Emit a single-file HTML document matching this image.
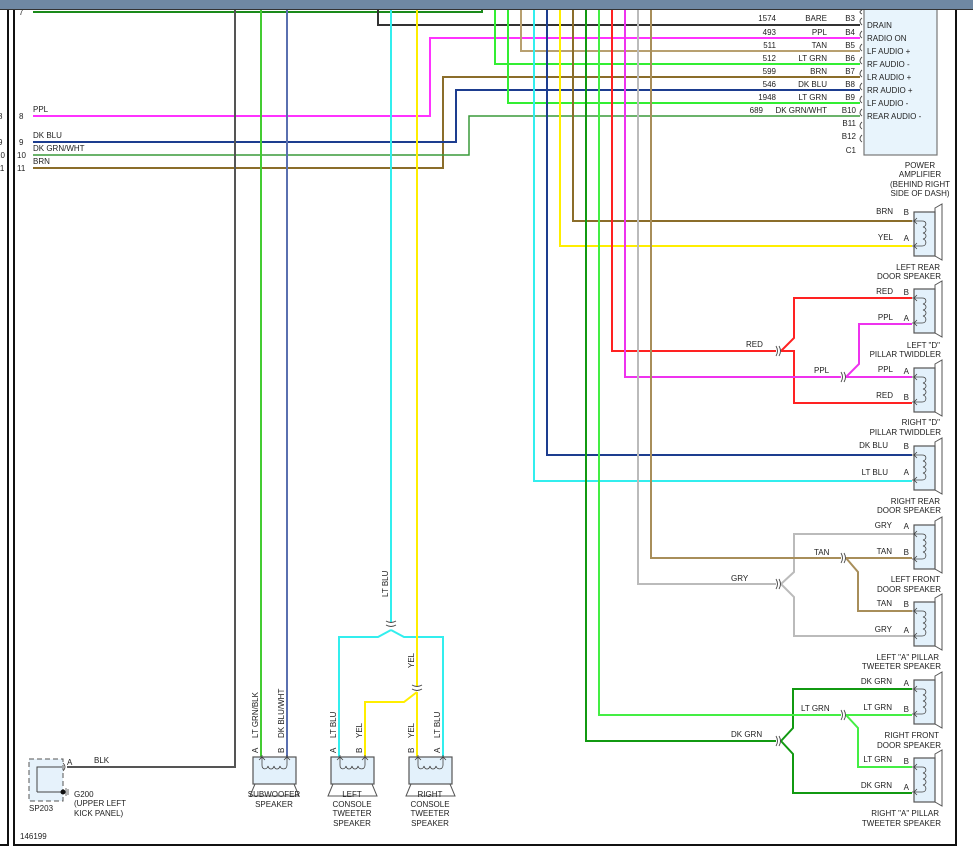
<!DOCTYPE html>
<html><head><meta charset="utf-8"><style>
html,body{margin:0;padding:0;background:#fff}
svg{display:block}
text{font-family:"Liberation Sans",sans-serif;font-size:8px;fill:#222}
</style></head><body>
<svg width="973" height="854" viewBox="0 0 973 854" xmlns="http://www.w3.org/2000/svg">
<defs>
<g id="rs">
<polygon points="21,-4 28,-8 28,48 21,44" fill="#fff" stroke="#555" stroke-width="1"/>
<rect x="0" y="0" width="21" height="44" fill="#e3f1fb" stroke="#555" stroke-width="1.2"/>
<path d="M-2,9 L8,9 M-2,34 L8,34 M3,6 L0,9 L3,12 M3,31 L0,34 L3,37" fill="none" stroke="#444" stroke-width="0.8"/>
<path d="M8,9 C13,9 13,14 9,15 C13,16 13,20 9,21 C13,22 13,26 9,27 C13,28 13,34 8,34" fill="none" stroke="#444" stroke-width="0.8"/>
</g>
<g id="bs">
<polygon points="2,27 -3,39 46,39 41,27" fill="#fff" stroke="#555" stroke-width="1"/>
<rect x="0" y="0" width="43" height="27" fill="#e3f1fb" stroke="#555" stroke-width="1.2"/>
<path d="M9,-2 L9,8 M34,-2 L34,8 M6,3 L9,0 L12,3 M31,3 L34,0 L37,3" fill="none" stroke="#444" stroke-width="0.8"/>
<path d="M9,8 C9,13 14,13 15,9 C16,13 20,13 21,9 C22,13 26,13 27,9 C28,13 34,13 34,8" fill="none" stroke="#444" stroke-width="0.8"/>
</g>
</defs>
<!-- top bar -->
<rect x="0" y="0" width="973" height="9" fill="#6f88a3"/>
<line x1="0" y1="9.5" x2="973" y2="9.5" stroke="#333" stroke-width="1"/>
<!-- borders -->
<g stroke="#111" stroke-width="2" fill="none">
<path d="M8,10 L8,845 L0,845"/>
<path d="M14,10 L14,845 L956,845 L956,10"/>
</g>
<g font-size="8">
<text x="19" y="15">7</text>
<text x="19" y="119">8</text>
<text x="19" y="145">9</text>
<text x="17" y="158">10</text>
<text x="17" y="171">11</text>
<text x="-2" y="119">8</text>
<text x="-2" y="145">9</text>
<text x="-4" y="158">10</text>
<text x="-4" y="171">11</text>
</g>
<!-- wires -->
<g fill="none" stroke-width="2">
<path d="M33,12 L482,12 L482,9" stroke="#1a8a1a"/>
<path d="M378,9 L378,25 L860,25" stroke="#333"/>
<path d="M33,116 L430,116 L430,38 L860,38" stroke="#ff33ff"/>
<path d="M33,168 L443,168 L443,77 L860,77" stroke="#8b6d2a"/>
<path d="M33,142 L456,142 L456,90 L860,90" stroke="#1d3d8f"/>
<path d="M33,155 L469,155 L469,116 L860,116" stroke="#3a9a3a" stroke-width="1.5"/>
<path d="M495,9 L495,64 L860,64" stroke="#33ee33"/>
<path d="M508,9 L508,103 L860,103" stroke="#33ee33"/>
<path d="M521,9 L521,51 L860,51" stroke="#b8a070"/>
<path d="M235,9 L235,767 L67,767" stroke="#555"/>
<path d="M261,9 L261,768" stroke="#44cc33"/>
<path d="M287,9 L287,768" stroke="#5a70b0"/>
<path d="M391,9 L391,622 M391,630 L378,637 L339,637 L339,768 M391,630 L404,637 L443,637 L443,768" stroke="#33eeee"/>
<path d="M417,9 L417,686 M417,692 L404,702 L365,702 L365,768 M417,692 L417,768" stroke="#ffee00"/>
<path d="M534,9 L534,481 L912,481" stroke="#33eeee"/>
<path d="M547,9 L547,455 L912,455" stroke="#1d3d8f"/>
<path d="M560,9 L560,246 L912,246" stroke="#ffee00"/>
<path d="M573,9 L573,221 L912,221" stroke="#8b6d2a"/>
<path d="M586,9 L586,741 L776,741 M781,741 L793,728 L793,689 L912,689 M781,741 L793,754 L793,793 L912,793" stroke="#119911"/>
<path d="M599,9 L599,715 L841,715 M846,715 L912,715 M846,715 L858,728 L858,767 L912,767" stroke="#44ee44"/>
<path d="M612,9 L612,351 L776,351 M781,351 L794,338 L794,298 L912,298 M781,351 L794,351 L794,403 L912,403" stroke="#ff2222"/>
<path d="M625,9 L625,377 L841,377 M846,377 L912,377 M846,377 L859,364 L859,324 L912,324" stroke="#ee33ee"/>
<path d="M638,9 L638,584 L776,584 M781,584 L794,572 L794,534 L912,534 M781,584 L794,597 L794,636 L912,636" stroke="#bbbbbb"/>
<path d="M651,9 L651,558 L841,558 M846,558 L912,558 M846,558 L858,572 L858,611 L912,611" stroke="#a88e5a"/>
</g>
<!-- inline connectors -->
<g fill="none" stroke="#444" stroke-width="0.9">
<path d="M776,346 Q779,351 776,356 M779,346 Q782,351 779,356"/>
<path d="M841,372 Q844,377 841,382 M844,372 Q847,377 844,382"/>
<path d="M776,579 Q779,584 776,589 M779,579 Q782,584 779,589"/>
<path d="M841,553 Q844,558 841,563 M844,553 Q847,558 844,563"/>
<path d="M776,736 Q779,741 776,746 M779,736 Q782,741 779,746"/>
<path d="M841,710 Q844,715 841,720 M844,710 Q847,715 844,720"/>
<path d="M386,621 Q391,624 396,621 M386,625 Q391,628 396,625"/>
<path d="M412,685 Q417,688 422,685 M412,689 Q417,692 422,689"/>
<path d="M862,18 Q858,21 862,25 M862,31 Q858,35 862,38 M862,44 Q858,48 862,51 M862,57 Q858,61 862,64 M862,70 Q858,74 862,77 M862,83 Q858,87 862,90 M862,96 Q858,100 862,103 M862,109 Q858,113 862,116 M862,122 Q858,126 862,129 M862,135 Q858,139 862,142 M862,10 Q858,12 862,14"/>
</g>
<!-- amplifier -->
<rect x="864" y="4" width="73" height="151" fill="#e8f4fc" stroke="#777" stroke-width="1.2"/>
<rect x="0" y="0" width="956" height="9" fill="#6f88a3"/>
<line x1="0" y1="9.5" x2="956" y2="9.5" stroke="#333" stroke-width="1"/>
<rect x="956" y="0" width="17" height="9" fill="#6f88a3"/>
<g>
<text x="867" y="28">DRAIN</text>
<text x="867" y="41">RADIO ON</text>
<text x="867" y="54">LF AUDIO +</text>
<text x="867" y="67">RF AUDIO -</text>
<text x="867" y="80">LR AUDIO +</text>
<text x="867" y="93">RR AUDIO +</text>
<text x="867" y="106">LF AUDIO -</text>
<text x="867" y="119">REAR AUDIO -</text>
</g>
<g text-anchor="end">
<text x="776" y="21">1574</text><text x="827" y="21">BARE</text><text x="855" y="21">B3</text>
<text x="776" y="35">493</text><text x="827" y="35">PPL</text><text x="855" y="35">B4</text>
<text x="776" y="48">511</text><text x="827" y="48">TAN</text><text x="855" y="48">B5</text>
<text x="776" y="61">512</text><text x="827" y="61">LT GRN</text><text x="855" y="61">B6</text>
<text x="776" y="74">599</text><text x="827" y="74">BRN</text><text x="855" y="74">B7</text>
<text x="776" y="87">546</text><text x="827" y="87">DK BLU</text><text x="855" y="87">B8</text>
<text x="776" y="100">1948</text><text x="827" y="100">LT GRN</text><text x="855" y="100">B9</text>
<text x="763" y="113">689</text><text x="827" y="113">DK GRN/WHT</text><text x="856" y="113">B10</text>
<text x="856" y="126">B11</text>
<text x="856" y="139">B12</text>
<text x="856" y="153">C1</text>
</g>
<g text-anchor="middle">
<text x="920" y="168">POWER</text>
<text x="920" y="177">AMPLIFIER</text>
<text x="920" y="187">(BEHIND RIGHT</text>
<text x="920" y="196">SIDE OF DASH)</text>
</g>
<!-- left wire labels -->
<text x="33" y="112">PPL</text>
<text x="33" y="138">DK BLU</text>
<text x="33" y="151">DK GRN/WHT</text>
<text x="33" y="164">BRN</text>
<!-- right speakers -->
<use href="#rs" x="914" y="212"/>
<use href="#rs" x="914" y="289"/>
<use href="#rs" x="914" y="368"/>
<use href="#rs" x="914" y="446"/>
<use href="#rs" x="914" y="525"/>
<use href="#rs" x="914" y="602"/>
<use href="#rs" x="914" y="680"/>
<use href="#rs" x="914" y="758"/>
<g text-anchor="end">
<text x="893" y="214">BRN</text><text x="909" y="215">B</text>
<text x="893" y="240">YEL</text><text x="909" y="241">A</text>
<text x="893" y="294">RED</text><text x="909" y="295">B</text>
<text x="893" y="320">PPL</text><text x="909" y="321">A</text>
<text x="893" y="372">PPL</text><text x="909" y="374">A</text>
<text x="893" y="398">RED</text><text x="909" y="400">B</text>
<text x="888" y="448">DK BLU</text><text x="909" y="449">B</text>
<text x="888" y="475">LT BLU</text><text x="909" y="475">A</text>
<text x="892" y="528">GRY</text><text x="909" y="529">A</text>
<text x="892" y="554">TAN</text><text x="909" y="555">B</text>
<text x="892" y="606">TAN</text><text x="909" y="607">B</text>
<text x="892" y="632">GRY</text><text x="909" y="633">A</text>
<text x="892" y="684">DK GRN</text><text x="909" y="686">A</text>
<text x="892" y="710">LT GRN</text><text x="909" y="712">B</text>
<text x="892" y="762">LT GRN</text><text x="909" y="764">B</text>
<text x="892" y="788">DK GRN</text><text x="909" y="790">A</text>
<text x="940" y="270">LEFT REAR</text><text x="941" y="279">DOOR SPEAKER</text>
<text x="940" y="348">LEFT "D"</text><text x="941" y="357">PILLAR TWIDDLER</text>
<text x="940" y="425">RIGHT "D"</text><text x="941" y="435">PILLAR TWIDDLER</text>
<text x="940" y="504">RIGHT REAR</text><text x="941" y="513">DOOR SPEAKER</text>
<text x="940" y="582">LEFT FRONT</text><text x="941" y="592">DOOR SPEAKER</text>
<text x="939" y="660">LEFT "A" PILLAR</text><text x="941" y="669">TWEETER SPEAKER</text>
<text x="939" y="738">RIGHT FRONT</text><text x="941" y="748">DOOR SPEAKER</text>
<text x="939" y="816">RIGHT "A" PILLAR</text><text x="941" y="826">TWEETER SPEAKER</text>
</g>
<text x="746" y="347">RED</text>
<text x="814" y="373">PPL</text>
<text x="731" y="581">GRY</text>
<text x="814" y="555">TAN</text>
<text x="731" y="737">DK GRN</text>
<text x="801" y="711">LT GRN</text>
<!-- bottom speakers -->
<use href="#bs" x="253" y="757"/>
<use href="#bs" x="331" y="757"/>
<use href="#bs" x="409" y="757"/>
<g text-anchor="middle">
<text x="274" y="797">SUBWOOFER</text><text x="274" y="807">SPEAKER</text>
<text x="352" y="797">LEFT</text><text x="352" y="807">CONSOLE</text><text x="352" y="816">TWEETER</text><text x="352" y="826">SPEAKER</text>
<text x="430" y="797">RIGHT</text><text x="430" y="807">CONSOLE</text><text x="430" y="816">TWEETER</text><text x="430" y="826">SPEAKER</text>
</g>
<g>
<text transform="translate(258,753) rotate(-90)">A</text>
<text transform="translate(258,738) rotate(-90)">LT GRN/BLK</text>
<text transform="translate(284,753) rotate(-90)">B</text>
<text transform="translate(284,738) rotate(-90)">DK BLU/WHT</text>
<text transform="translate(336,753) rotate(-90)">A</text>
<text transform="translate(336,738) rotate(-90)">LT BLU</text>
<text transform="translate(362,753) rotate(-90)">B</text>
<text transform="translate(362,738) rotate(-90)">YEL</text>
<text transform="translate(414,753) rotate(-90)">B</text>
<text transform="translate(414,738) rotate(-90)">YEL</text>
<text transform="translate(440,753) rotate(-90)">A</text>
<text transform="translate(440,738) rotate(-90)">LT BLU</text>
<text transform="translate(388,597) rotate(-90)">LT BLU</text>
<text transform="translate(414,668) rotate(-90)">YEL</text>
</g>
<!-- G200 -->
<rect x="29" y="759" width="34" height="42" fill="#e6f2fb" stroke="#555" stroke-dasharray="5,3" stroke-width="1"/>
<path d="M37,792 L37,767 L62,767 M37,792 L63,792" fill="none" stroke="#444" stroke-width="1"/>
<circle cx="63" cy="792" r="2.5" fill="#111"/>
<path d="M66,788 L66,796 M68,789 L68,795" stroke="#444" stroke-width="0.8"/>
<path d="M63,763 Q67,767 63,771" fill="none" stroke="#444" stroke-width="0.8"/>
<text x="67" y="765">A</text>
<text x="94" y="763">BLK</text>
<text x="74" y="797">G200</text>
<text x="74" y="806">(UPPER LEFT</text>
<text x="74" y="816">KICK PANEL)</text>
<text x="29" y="811">SP203</text>
<text x="20" y="839">146199</text>
</svg>
</body></html>
